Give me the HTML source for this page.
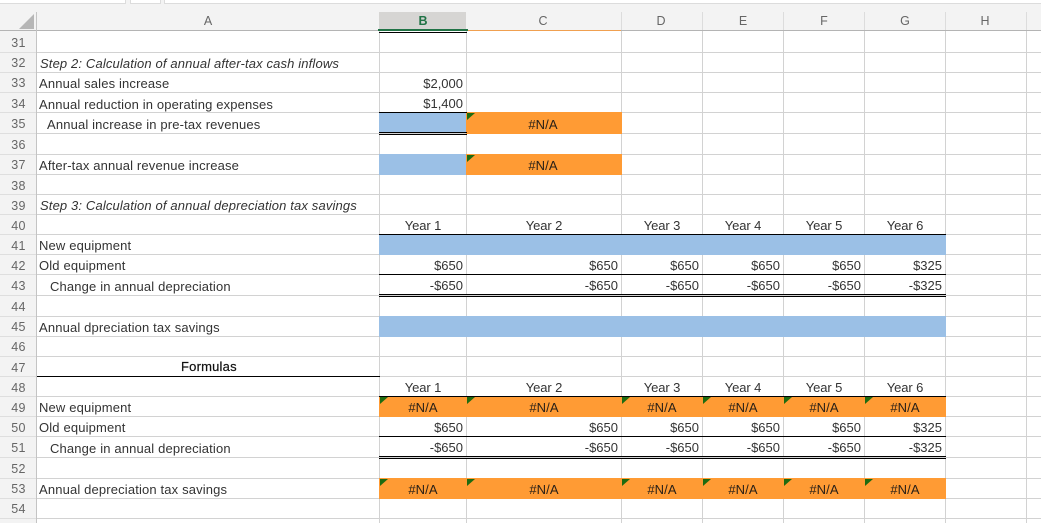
<!DOCTYPE html>
<html><head><meta charset="utf-8"><style>
html,body{margin:0;padding:0;width:1041px;height:523px;overflow:hidden;background:#fff}
#r{position:relative;width:1041px;height:523px;overflow:hidden;font:13px "Liberation Sans",sans-serif;color:#333}
#r div{position:absolute}
.h{left:0;width:1041px;height:1px;background:#d2d2d2}
.v{top:31px;width:1px;height:492px;background:#d2d2d2}
.hs{top:12px;width:1px;height:18px;background:#dcdcdc}
.k{height:1px;background:#000}
.b{background:#9bc0e6}
.o{background:#ff9b34}
.g{left:0;width:36px;height:1px;background:#dedede}
.n{left:1px;width:35px;text-align:center;font-size:12.5px;line-height:20px;height:20px;color:#666;letter-spacing:.3px}
.c{width:60px;text-align:center;font-size:12.5px;line-height:18px;height:18px;top:12px;color:#666}
.a{left:39px;white-space:nowrap;line-height:22px;height:22px;letter-spacing:.15px}
.i{font-style:italic;letter-spacing:.14px;left:40px}
.y{width:80px;text-align:center;line-height:22px;height:22px;letter-spacing:-.1px}
.m{width:80px;text-align:center;line-height:22px;height:22px;color:#2a2118;letter-spacing:.1px}
.p{width:80px;text-align:right;line-height:22px;height:22px}
.t{width:0;height:0;border-top:7px solid #1e6b10;border-right:8px solid transparent}
</style></head><body><div id="r">

<div style="left:0;top:0;width:1041px;height:31px;background:#f3f3f3"></div>
<div style="left:0;top:0;width:125px;height:3px;background:#fff;border-right:1px solid #dcdcdc;border-bottom:1px solid #dcdcdc"></div>
<div style="left:130px;top:0;width:29px;height:3px;background:#fff;border:solid #dcdcdc;border-width:0 1px 1px 1px"></div>
<div style="left:164px;top:0;width:877px;height:3px;background:#fff;border:solid #dcdcdc;border-width:0 0 1px 1px"></div>
<div style="left:0;top:31px;width:36px;height:492px;background:#f3f3f3"></div>
<svg style="position:absolute;left:19px;top:14px" width="15" height="15"><polygon points="15,0 15,15 0,15" fill="#b6b6b6"/></svg>

<div class="hs" style="left:36px"></div><div class="hs" style="left:621px"></div><div class="hs" style="left:702px"></div><div class="hs" style="left:783px"></div><div class="hs" style="left:864px"></div><div class="hs" style="left:945px"></div><div class="hs" style="left:1026px"></div>
<div style="left:379px;top:12px;width:87px;height:18px;background:#d6d5d3"></div>
<div style="left:0;top:30px;width:1041px;height:1px;background:#b4b4b4"></div>
<div style="left:36px;top:12px;width:1px;height:511px;background:#c4c4c4"></div>
<div class="c" style="left:178px">A</div>
<div class="c" style="left:393px;color:#217346;font-weight:bold">B</div>
<div class="c" style="left:513px">C</div>
<div class="c" style="left:631px">D</div>
<div class="c" style="left:713px">E</div>
<div class="c" style="left:794px">F</div>
<div class="c" style="left:875px">G</div>
<div class="c" style="left:955px">H</div>

<div class="g" style="top:52px"></div><div class="g" style="top:72px"></div><div class="g" style="top:92px"></div><div class="g" style="top:112px"></div><div class="g" style="top:133px"></div><div class="g" style="top:154px"></div><div class="g" style="top:174px"></div><div class="g" style="top:194px"></div><div class="g" style="top:214px"></div><div class="g" style="top:234px"></div><div class="g" style="top:254px"></div><div class="g" style="top:274px"></div><div class="g" style="top:295px"></div><div class="g" style="top:316px"></div><div class="g" style="top:336px"></div><div class="g" style="top:356px"></div><div class="g" style="top:376px"></div><div class="g" style="top:396px"></div><div class="g" style="top:416px"></div><div class="g" style="top:436px"></div><div class="g" style="top:457px"></div><div class="g" style="top:478px"></div><div class="g" style="top:498px"></div><div class="g" style="top:518px"></div>

<div class="h" style="left:37px;top:52px"></div><div class="h" style="left:37px;top:72px"></div><div class="h" style="left:37px;top:92px"></div><div class="h" style="left:37px;top:112px"></div><div class="h" style="left:37px;top:133px"></div><div class="h" style="left:37px;top:154px"></div><div class="h" style="left:37px;top:174px"></div><div class="h" style="left:37px;top:194px"></div><div class="h" style="left:37px;top:214px"></div><div class="h" style="left:37px;top:234px"></div><div class="h" style="left:37px;top:254px"></div><div class="h" style="left:37px;top:274px"></div><div class="h" style="left:37px;top:295px"></div><div class="h" style="left:37px;top:316px"></div><div class="h" style="left:37px;top:336px"></div><div class="h" style="left:37px;top:356px"></div><div class="h" style="left:37px;top:376px"></div><div class="h" style="left:37px;top:396px"></div><div class="h" style="left:37px;top:416px"></div><div class="h" style="left:37px;top:436px"></div><div class="h" style="left:37px;top:457px"></div><div class="h" style="left:37px;top:478px"></div><div class="h" style="left:37px;top:498px"></div><div class="h" style="left:37px;top:518px"></div>
<div class="v" style="left:379px"></div><div class="v" style="left:466px"></div><div class="v" style="left:621px"></div><div class="v" style="left:702px"></div><div class="v" style="left:783px"></div><div class="v" style="left:864px"></div><div class="v" style="left:945px"></div><div class="v" style="left:1026px"></div>

<div style="left:378px;top:29px;width:90px;height:2px;background:#217346"></div>
<div style="left:468px;top:30px;width:153px;height:1px;background:#f0a050"></div>
<div class="k" style="left:379px;top:32px;width:88px"></div>

<div class="b" style="left:379px;top:112px;width:87px;height:21px"></div>
<div class="o" style="left:466px;top:112px;width:156px;height:22px"></div>
<div class="b" style="left:379px;top:154px;width:87px;height:21px"></div>
<div class="o" style="left:466px;top:154px;width:156px;height:21px"></div>
<div class="k" style="left:379px;top:112px;width:88px"></div>
<div class="k" style="left:379px;top:132px;width:88px"></div>
<div class="k" style="left:379px;top:134px;width:88px"></div>
<div class="t" style="left:467px;top:113px"></div>
<div class="t" style="left:467px;top:155px"></div>

<div class="b" style="left:379px;top:235px;width:567px;height:20px"></div>
<div class="b" style="left:379px;top:316px;width:567px;height:21px"></div>
<div class="k" style="left:379px;top:234px;width:567px"></div>
<div class="k" style="left:379px;top:274px;width:567px"></div>
<div class="k" style="left:379px;top:294px;width:567px"></div>
<div class="k" style="left:379px;top:296px;width:567px"></div>

<div class="k" style="left:37px;top:376px;width:343px"></div>
<div class="o" style="left:379px;top:397px;width:567px;height:20px"></div>
<div class="o" style="left:379px;top:478px;width:567px;height:21px"></div>
<div class="k" style="left:379px;top:396px;width:567px"></div>
<div class="k" style="left:379px;top:436px;width:567px"></div>
<div class="k" style="left:379px;top:456px;width:567px"></div>
<div class="k" style="left:379px;top:458px;width:567px"></div>

<div class="t" style="left:380px;top:397px"></div><div class="t" style="left:467px;top:397px"></div><div class="t" style="left:622px;top:397px"></div><div class="t" style="left:703px;top:397px"></div><div class="t" style="left:784px;top:397px"></div><div class="t" style="left:865px;top:397px"></div>
<div class="t" style="left:380px;top:479px"></div><div class="t" style="left:467px;top:479px"></div><div class="t" style="left:622px;top:479px"></div><div class="t" style="left:703px;top:479px"></div><div class="t" style="left:784px;top:479px"></div><div class="t" style="left:865px;top:479px"></div>

<div class="n" style="top:33px">31</div><div class="n" style="top:53px">32</div><div class="n" style="top:73px">33</div><div class="n" style="top:94px">34</div><div class="n" style="top:114px">35</div><div class="n" style="top:135px">36</div><div class="n" style="top:155px">37</div><div class="n" style="top:176px">38</div><div class="n" style="top:196px">39</div><div class="n" style="top:216px">40</div><div class="n" style="top:236px">41</div><div class="n" style="top:256px">42</div><div class="n" style="top:276px">43</div><div class="n" style="top:297px">44</div><div class="n" style="top:317px">45</div><div class="n" style="top:337px">46</div><div class="n" style="top:358px">47</div><div class="n" style="top:378px">48</div><div class="n" style="top:398px">49</div><div class="n" style="top:418px">50</div><div class="n" style="top:438px">51</div><div class="n" style="top:459px">52</div><div class="n" style="top:479px">53</div><div class="n" style="top:499px">54</div>

<div class="a i" style="top:53px">Step 2: Calculation of annual after-tax cash inflows</div>
<div class="a" style="top:73px">Annual sales increase</div>
<div class="a" style="top:94px">Annual reduction in operating expenses</div>
<div class="a" style="top:114px;left:47px">Annual increase in pre-tax revenues</div>
<div class="a" style="top:155px">After-tax annual revenue increase</div>
<div class="a i" style="top:195px">Step 3: Calculation of annual depreciation tax savings</div>
<div class="a" style="top:235px">New equipment</div>
<div class="a" style="top:255px">Old equipment</div>
<div class="a" style="top:276px;left:50px">Change in annual depreciation</div>
<div class="a" style="top:317px">Annual dpreciation tax savings</div>
<div class="a" style="top:356px;left:181px;letter-spacing:.2px;color:#111;-webkit-text-stroke:.2px #111">Formulas</div>
<div class="a" style="top:397px">New equipment</div>
<div class="a" style="top:417px">Old equipment</div>
<div class="a" style="top:438px;left:50px">Change in annual depreciation</div>
<div class="a" style="top:479px">Annual depreciation tax savings</div>

<div class="p" style="left:383px;top:73px">$2,000</div>
<div class="p" style="left:383px;top:93px">$1,400</div>
<div class="m" style="left:503px;top:114px">#N/A</div>
<div class="m" style="left:503px;top:155px">#N/A</div>

<div class="y" style="left:383px;top:215px">Year 1</div><div class="y" style="left:504px;top:215px">Year 2</div><div class="y" style="left:622px;top:215px">Year 3</div><div class="y" style="left:703px;top:215px">Year 4</div><div class="y" style="left:784px;top:215px">Year 5</div><div class="y" style="left:865px;top:215px">Year 6</div>

<div class="p" style="left:383px;top:255px">$650</div><div class="p" style="left:538px;top:255px">$650</div><div class="p" style="left:619px;top:255px">$650</div><div class="p" style="left:700px;top:255px">$650</div><div class="p" style="left:781px;top:255px">$650</div><div class="p" style="left:862px;top:255px">$325</div>
<div class="p" style="left:383px;top:275px">-$650</div><div class="p" style="left:538px;top:275px">-$650</div><div class="p" style="left:619px;top:275px">-$650</div><div class="p" style="left:700px;top:275px">-$650</div><div class="p" style="left:781px;top:275px">-$650</div><div class="p" style="left:862px;top:275px">-$325</div>

<div class="y" style="left:383px;top:377px">Year 1</div><div class="y" style="left:504px;top:377px">Year 2</div><div class="y" style="left:622px;top:377px">Year 3</div><div class="y" style="left:703px;top:377px">Year 4</div><div class="y" style="left:784px;top:377px">Year 5</div><div class="y" style="left:865px;top:377px">Year 6</div>

<div class="m" style="left:383px;top:397px">#N/A</div><div class="m" style="left:504px;top:397px">#N/A</div><div class="m" style="left:622px;top:397px">#N/A</div><div class="m" style="left:703px;top:397px">#N/A</div><div class="m" style="left:784px;top:397px">#N/A</div><div class="m" style="left:865px;top:397px">#N/A</div>

<div class="p" style="left:383px;top:417px">$650</div><div class="p" style="left:538px;top:417px">$650</div><div class="p" style="left:619px;top:417px">$650</div><div class="p" style="left:700px;top:417px">$650</div><div class="p" style="left:781px;top:417px">$650</div><div class="p" style="left:862px;top:417px">$325</div>
<div class="p" style="left:383px;top:437px">-$650</div><div class="p" style="left:538px;top:437px">-$650</div><div class="p" style="left:619px;top:437px">-$650</div><div class="p" style="left:700px;top:437px">-$650</div><div class="p" style="left:781px;top:437px">-$650</div><div class="p" style="left:862px;top:437px">-$325</div>

<div class="m" style="left:383px;top:479px">#N/A</div><div class="m" style="left:504px;top:479px">#N/A</div><div class="m" style="left:622px;top:479px">#N/A</div><div class="m" style="left:703px;top:479px">#N/A</div><div class="m" style="left:784px;top:479px">#N/A</div><div class="m" style="left:865px;top:479px">#N/A</div>

</div></body></html>
